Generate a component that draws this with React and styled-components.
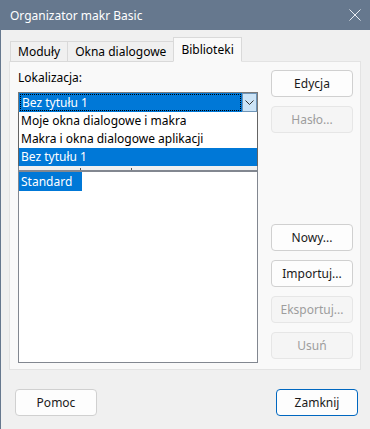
import React from 'react'
import styled, { createGlobalStyle } from 'styled-components'

const GlobalStyle = createGlobalStyle`
  html, body {
    margin: 0;
    padding: 0;
    background: #f0f0f0;
  }
  body {
    font-family: 'Noto Sans', 'Open Sans', sans-serif;
    font-size: 12px;
  }
`

const App = () => {
  return (
    <Window>
      <GlobalStyle />
      <TitleBar>
        <Title>Organizator makr Basic</Title>
        <CloseIcon viewBox="0 0 12 12">
          <path d="M0.5 0.5 L11.5 11.5 M11.5 0.5 L0.5 11.5" stroke="#e8ecf2" strokeWidth="1" />
        </CloseIcon>
      </TitleBar>

      <Body>
        <TabStrip>
          <Tab>Moduły</Tab>
          <Tab>Okna dialogowe</Tab>
          <Tab active>Biblioteki</Tab>
        </TabStrip>

        <Panel>
          <LeftColumn>
            <Label>Lokalizacja:</Label>
            <ComboWrap>
              <Combo>
                <ComboValue>
                  <FocusRect>Bez tytułu 1</FocusRect>
                </ComboValue>
                <ComboButton>
                  <svg width="9" height="5" viewBox="0 0 9 5">
                    <path d="M0.5 0.5 L4.5 4.5 L8.5 0.5" fill="none" stroke="#333" strokeWidth="1" />
                  </svg>
                </ComboButton>
              </Combo>
              <DropList>
                <DropItem>Moje okna dialogowe i makra</DropItem>
                <DropItem>Makra i okna dialogowe aplikacji</DropItem>
                <DropItem selected>Bez tytułu 1</DropItem>
              </DropList>
            </ComboWrap>

            <ListHeader>
              <HeaderCell width={62} />
              <HeaderCell width={51} />
            </ListHeader>
            <ListBox>
              <ListItem selected>Standard</ListItem>
            </ListBox>
          </LeftColumn>

          <RightColumn>
            <Button>Edycja</Button>
            <Button disabled>Hasło...</Button>
            <Spacer />
            <Button>Nowy...</Button>
            <Button>Importuj...</Button>
            <Button disabled>Eksportuj...</Button>
            <Button disabled>Usuń</Button>
          </RightColumn>
        </Panel>

        <Footer>
          <Button>Pomoc</Button>
          <Button primary>Zamknij</Button>
        </Footer>
      </Body>
    </Window>
  )
}

export default App

const Window = styled.div`
  width: 370px;
  height: 429px;
  display: flex;
  flex-direction: column;
  background: #f0f0f0;
  border-left: 1px solid #66788e;
  box-sizing: border-box;
  overflow: hidden;
  color: #000;
`

const TitleBar = styled.div`
  height: 30px;
  flex: none;
  display: flex;
  align-items: center;
  justify-content: space-between;
  padding: 0 9px 0 9px;
  background: #66788e;
`

const Title = styled.div`
  color: #ffffff;
  font-size: 12px;
  padding-top: 1px;
`

const CloseIcon = styled.svg`
  width: 12px;
  height: 12px;
`

const Body = styled.div`
  flex: 1;
  display: flex;
  flex-direction: column;
  padding: 6px 8px 0 8px;
`

const TabStrip = styled.div`
  height: 25px;
  display: flex;
  align-items: flex-end;
  padding-left: 2px;
  position: relative;
  z-index: 1;
`

const Tab = styled.div`
  height: ${(p) => (p.active ? '25px' : '21px')};
  box-sizing: border-box;
  padding: 0 7px;
  display: flex;
  align-items: center;
  background: ${(p) => (p.active ? '#f9f9f9' : '#f0f0f0')};
  border: 1px solid #d9d9d9;
  border-bottom: ${(p) => (p.active ? '1px solid #f9f9f9' : '1px solid #d9d9d9')};
  margin-left: -1px;
  margin-bottom: -1px;
`

const Panel = styled.div`
  width: 352px;
  height: 309px;
  box-sizing: border-box;
  background: #f9f9f9;
  border: 1px solid #e3e3e3;
  display: flex;
  justify-content: space-between;
  padding: 8px 7px 0 8px;
`

const LeftColumn = styled.div`
  width: 240px;
  display: flex;
  flex-direction: column;
`

const Label = styled.div`
  height: 16px;
  line-height: 16px;
`

const ComboWrap = styled.div`
  position: relative;
  margin-top: 6px;
`

const Combo = styled.div`
  height: 21px;
  box-sizing: border-box;
  display: flex;
  border: 1px solid #7a7a7a;
  background: #fff;
`

const ComboValue = styled.div`
  flex: 1;
  background: #0078d7;
  padding: 1px;
  display: flex;
`

const FocusRect = styled.div`
  flex: 1;
  border: 1px dotted #ffffff;
  outline: 1px dotted #000;
  outline-offset: -1px;
  color: #fff;
  display: flex;
  align-items: center;
  padding-left: 1px;
  line-height: 15px;
`

const ComboButton = styled.div`
  width: 15px;
  box-sizing: border-box;
  background: #cce4f7;
  border: 1px solid #6e95b8;
  display: flex;
  align-items: center;
  justify-content: center;
`

const DropList = styled.div`
  position: absolute;
  left: 0;
  right: 0;
  top: 20px;
  background: #fff;
  border: 1px solid #646464;
  border-top: none;
  border-bottom: none;
  z-index: 5;
`

const DropItem = styled.div`
  height: 18px;
  line-height: 18px;
  padding-left: 2px;
  color: ${(p) => (p.selected ? '#fff' : '#000')};
  background: ${(p) => (p.selected ? '#0078d7' : '#fff')};
`

const ListHeader = styled.div`
  margin-top: 37px;
  height: 21px;
  box-sizing: border-box;
  display: flex;
  background: #f0f0f0;
  border: 1px solid #828790;
  border-top: none;
`

const HeaderCell = styled.div`
  width: ${(p) => p.width}px;
  box-sizing: border-box;
  border-right: 1px solid #555;
  margin-top: 18px;
  height: 2px;
`

const ListBox = styled.div`
  height: 192px;
  box-sizing: border-box;
  border: 1px solid #828790;
  background: #fff;
  display: flex;
  flex-direction: column;
  align-items: flex-start;
`

const ListItem = styled.div`
  width: 63px;
  height: 19px;
  line-height: 19px;
  padding-left: 2px;
  box-sizing: border-box;
  color: ${(p) => (p.selected ? '#fff' : '#000')};
  background: ${(p) => (p.selected ? '#0078d7' : 'transparent')};
`

const RightColumn = styled.div`
  width: 82px;
  display: flex;
  flex-direction: column;
  gap: 9px;
`

const Spacer = styled.div`
  height: 73px;
`

const Button = styled.button`
  width: 82px;
  height: 27px;
  box-sizing: border-box;
  font-family: inherit;
  font-size: 12px;
  border-radius: 4px;
  padding: 0;
  background: ${(p) => (p.disabled ? '#f5f5f5' : '#fdfdfd')};
  color: ${(p) => (p.disabled ? '#9d9d9d' : '#1a1a1a')};
  border: 1px solid ${(p) => (p.primary ? '#0067c0' : p.disabled ? '#e6e6e6' : '#d0d0d0')};
`

const Footer = styled.div`
  display: flex;
  justify-content: space-between;
  padding: 19px 4px 0 6px;
`
